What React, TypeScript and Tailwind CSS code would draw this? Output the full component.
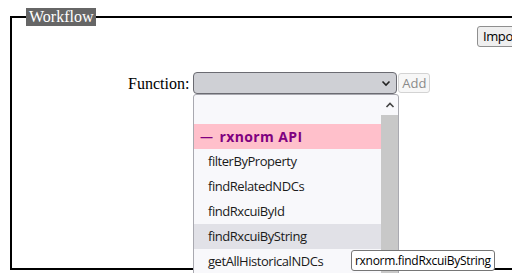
import React from "react";

const items = [
  "filterByProperty",
  "findRelatedNDCs",
  "findRxcuiById",
  "findRxcuiByString",
  "getAllHistoricalNDCs",
];

export default function App() {
  return (
    <div className="relative w-[512px] h-[273px] overflow-hidden bg-white">
      <fieldset className="ml-[10px] mt-[8px] w-[526px] h-[262px] border-2 border-black px-[10px]">
        <legend className="ml-[4px] px-[3px] bg-[#666666] text-white text-[16px] leading-[18px] font-['Liberation_Serif',serif]">
          Workflow
        </legend>
        <div className="flex justify-end mr-[-4px]">
          <button className="h-[21px] px-[5px] rounded-[3px] border border-[#8f8f8f] bg-[#efefef] text-[13px] leading-[19px] text-black font-['Open_Sans',sans-serif] tracking-[-0.4px]">
            Import
          </button>
        </div>
        <div className="flex items-center mt-[25px] ml-[106px]">
          <span className="text-[16px] leading-[21px] text-black font-['Liberation_Serif',serif] mr-[4px]">
            Function:
          </span>
          <div className="w-[204px] h-[22px] rounded-[4px] border border-[#6b6b72] bg-[#cfd0d5] flex items-center justify-end pr-[4px]">
            <svg width="12" height="12" viewBox="0 0 12 12" className="text-[#222]">
              <path d="M2.5 4.5 L6 8 L9.5 4.5" fill="none" stroke="currentColor" strokeWidth="1.6" />
            </svg>
          </div>
          <button disabled className="ml-[1px] h-[20px] px-[3px] rounded-[3px] border border-[#d3d3d3] bg-[#f7f7f7] text-[13px] leading-[18px] text-[#8a8a8a] font-['Open_Sans',sans-serif]">
            Add
          </button>
        </div>
      </fieldset>

      <div className="absolute left-[193px] top-[94px] w-[206px] h-[190px] bg-[#f8f8fb] border border-[#a9a9b0] rounded-t-[3px] flex font-['Open_Sans',sans-serif]">
        <div className="flex-1 flex flex-col">
          <div className="h-[29px]" />
          <div className="h-[25px] bg-[#ffc0cb] flex items-center pl-[6px] text-[14px] font-bold text-[#800080] tracking-[0.4px]">
            <span className="text-[13px]">—</span>
            <span className="ml-[6px]">rxnorm API</span>
          </div>
          {items.map((it) => (
            <div
              key={it}
              className={
                "h-[25px] flex items-center pl-[14px] text-[13px] tracking-[-0.45px] text-[#1a1a1a] " +
                (it === "findRxcuiByString" ? "bg-[#e1e1e7]" : "")
              }
            >
              {it}
            </div>
          ))}
        </div>
        <div className="w-[17px] flex flex-col">
          <div className="h-[20px] flex items-center justify-center">
            <svg width="10" height="10" viewBox="0 0 10 10">
              <path d="M1.5 7 L5 3.5 L8.5 7" fill="none" stroke="#444" strokeWidth="1.6" />
            </svg>
          </div>
          <div className="flex-1 bg-[#c8c8c8]" />
        </div>
      </div>

      <div className="absolute left-[351px] top-[250px] h-[21px] px-[3px] bg-white border border-[#767676] rounded-[3px] text-[12px] leading-[19px] tracking-[-0.3px] text-black font-['Open_Sans',sans-serif]">
        rxnorm.findRxcuiByString
      </div>
    </div>
  );
}
